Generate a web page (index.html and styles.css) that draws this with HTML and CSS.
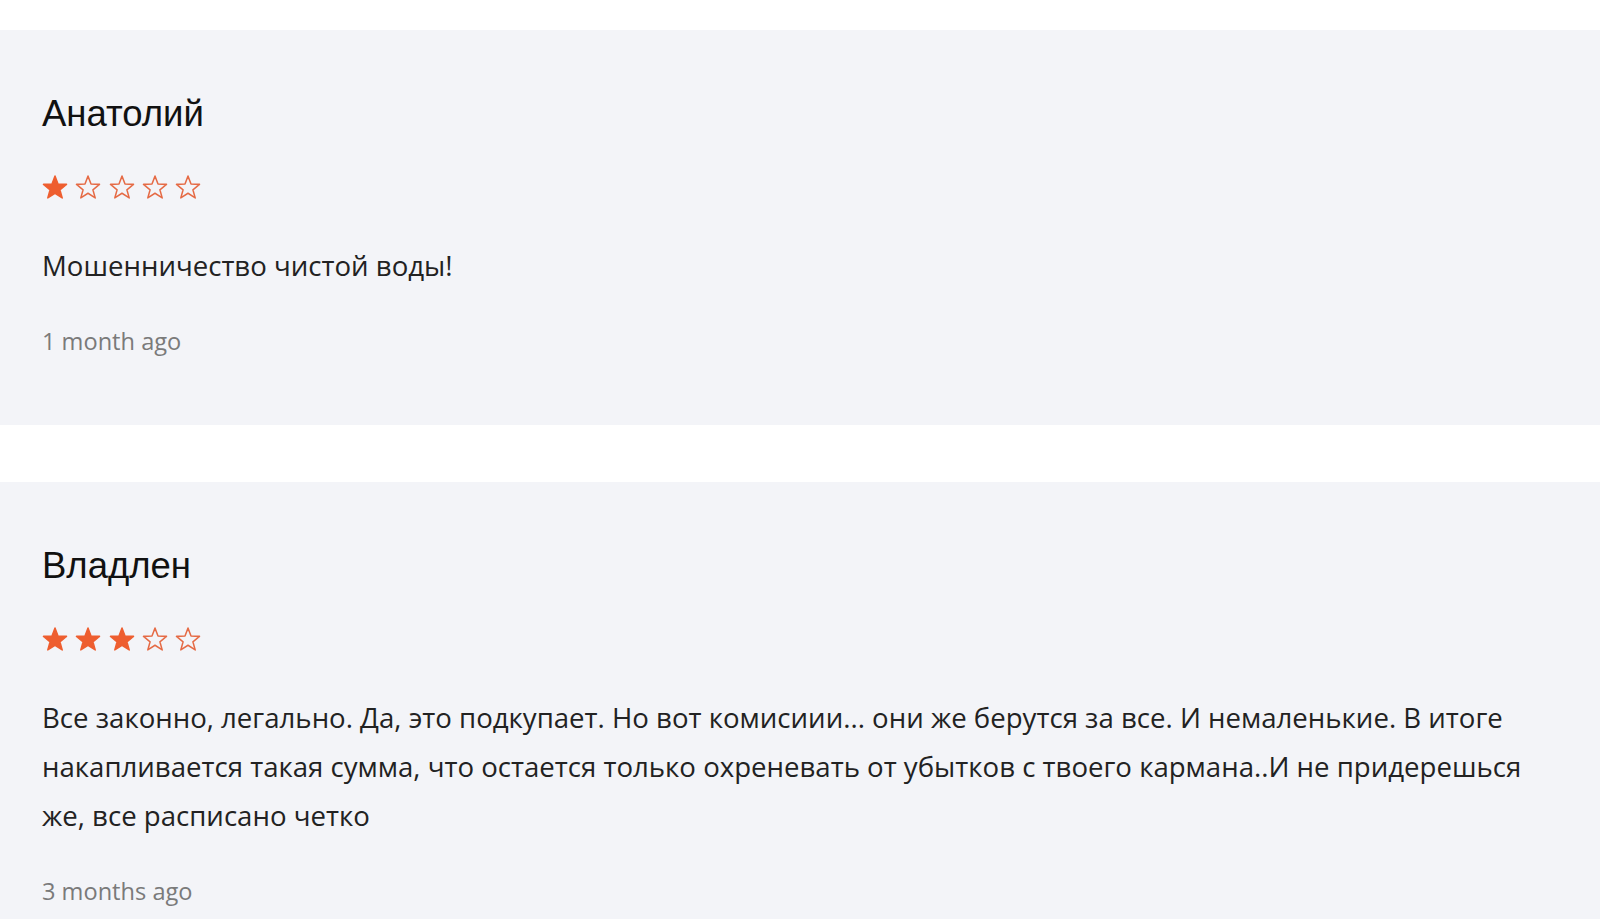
FILE: index.html
```html
<!DOCTYPE html>
<html lang="ru">
<head>
	<meta charset="UTF-8">
	<title>Отзывы</title>
	<link rel="stylesheet" href="styles.css">
</head>
<body>
	<section class="reviews">
		<div class="review">
			<h3 class="name">Анатолий</h3>
			<div class="stars">
				<svg class="star on" viewBox="0 0 26 22" preserveAspectRatio="none"><polygon points="13,1 16,8.2 24.5,8.6 17.9,13.6 20.2,21 13,16.8 5.8,21 8.1,13.6 1.5,8.6 10,8.2"/></svg>
				<svg class="star" viewBox="0 0 26 22" preserveAspectRatio="none"><polygon points="13,1 16,8.2 24.5,8.6 17.9,13.6 20.2,21 13,16.8 5.8,21 8.1,13.6 1.5,8.6 10,8.2"/></svg>
				<svg class="star" viewBox="0 0 26 22" preserveAspectRatio="none"><polygon points="13,1 16,8.2 24.5,8.6 17.9,13.6 20.2,21 13,16.8 5.8,21 8.1,13.6 1.5,8.6 10,8.2"/></svg>
				<svg class="star" viewBox="0 0 26 22" preserveAspectRatio="none"><polygon points="13,1 16,8.2 24.5,8.6 17.9,13.6 20.2,21 13,16.8 5.8,21 8.1,13.6 1.5,8.6 10,8.2"/></svg>
				<svg class="star" viewBox="0 0 26 22" preserveAspectRatio="none"><polygon points="13,1 16,8.2 24.5,8.6 17.9,13.6 20.2,21 13,16.8 5.8,21 8.1,13.6 1.5,8.6 10,8.2"/></svg>
			</div>
			<p class="text">Мошенничество чистой воды!</p>
			<span class="date">1 month ago</span>
		</div>
		<div class="review">
			<h3 class="name">Владлен</h3>
			<div class="stars">
				<svg class="star on" viewBox="0 0 26 22" preserveAspectRatio="none"><polygon points="13,1 16,8.2 24.5,8.6 17.9,13.6 20.2,21 13,16.8 5.8,21 8.1,13.6 1.5,8.6 10,8.2"/></svg>
				<svg class="star on" viewBox="0 0 26 22" preserveAspectRatio="none"><polygon points="13,1 16,8.2 24.5,8.6 17.9,13.6 20.2,21 13,16.8 5.8,21 8.1,13.6 1.5,8.6 10,8.2"/></svg>
				<svg class="star on" viewBox="0 0 26 22" preserveAspectRatio="none"><polygon points="13,1 16,8.2 24.5,8.6 17.9,13.6 20.2,21 13,16.8 5.8,21 8.1,13.6 1.5,8.6 10,8.2"/></svg>
				<svg class="star" viewBox="0 0 26 22" preserveAspectRatio="none"><polygon points="13,1 16,8.2 24.5,8.6 17.9,13.6 20.2,21 13,16.8 5.8,21 8.1,13.6 1.5,8.6 10,8.2"/></svg>
				<svg class="star" viewBox="0 0 26 22" preserveAspectRatio="none"><polygon points="13,1 16,8.2 24.5,8.6 17.9,13.6 20.2,21 13,16.8 5.8,21 8.1,13.6 1.5,8.6 10,8.2"/></svg>
			</div>
			<p class="text">Все законно, легально. Да, это подкупает. Но вот комисиии... они же берутся за все. И немаленькие. В итоге накапливается такая сумма, что остается только охреневать от убытков с твоего кармана..И не придерешься же, все расписано четко</p>
			<span class="date">3 months ago</span>
		</div>
	</section>
</body>
</html>
```

FILE: styles.css
```css
body{
	margin: 0;
	background: #fff;
	font-family: "Open Sans", "Noto Sans", sans-serif;
}
	.reviews{
		display: flex;
		flex-direction: column;
		gap: 57px;
		padding-top: 30px;
	}
	.review{
		display: flex;
		flex-direction: column;
		align-items: flex-start;
		background-color: #f3f4f8;
		padding: 63px 42px 68px;
	}
	.name{
		margin: 0;
		font-family: "Liberation Sans", Arial, sans-serif;
		font-size: 36.5px;
		line-height: 42px;
		font-weight: normal;
		color: #111;
	}
	.stars{
		display: flex;
		gap: 7.3px;
		margin-top: 40px;
	}
	.star{
		width: 26px;
		height: 24px;
		fill: none;
		stroke: #e56a45;
		stroke-width: 1.5;
		stroke-linejoin: round;
	}
	.star.on{
		fill: #ee5e30;
		stroke: #ee5e30;
	}
	.text{
		margin: 42px 0 0;
		font-size: 27.6px;
		line-height: 49px;
		color: #222;
	}
	.date{
		margin-top: 35px;
		font-size: 23.6px;
		line-height: 32px;
		color: #7a7a7a;
	}
```
